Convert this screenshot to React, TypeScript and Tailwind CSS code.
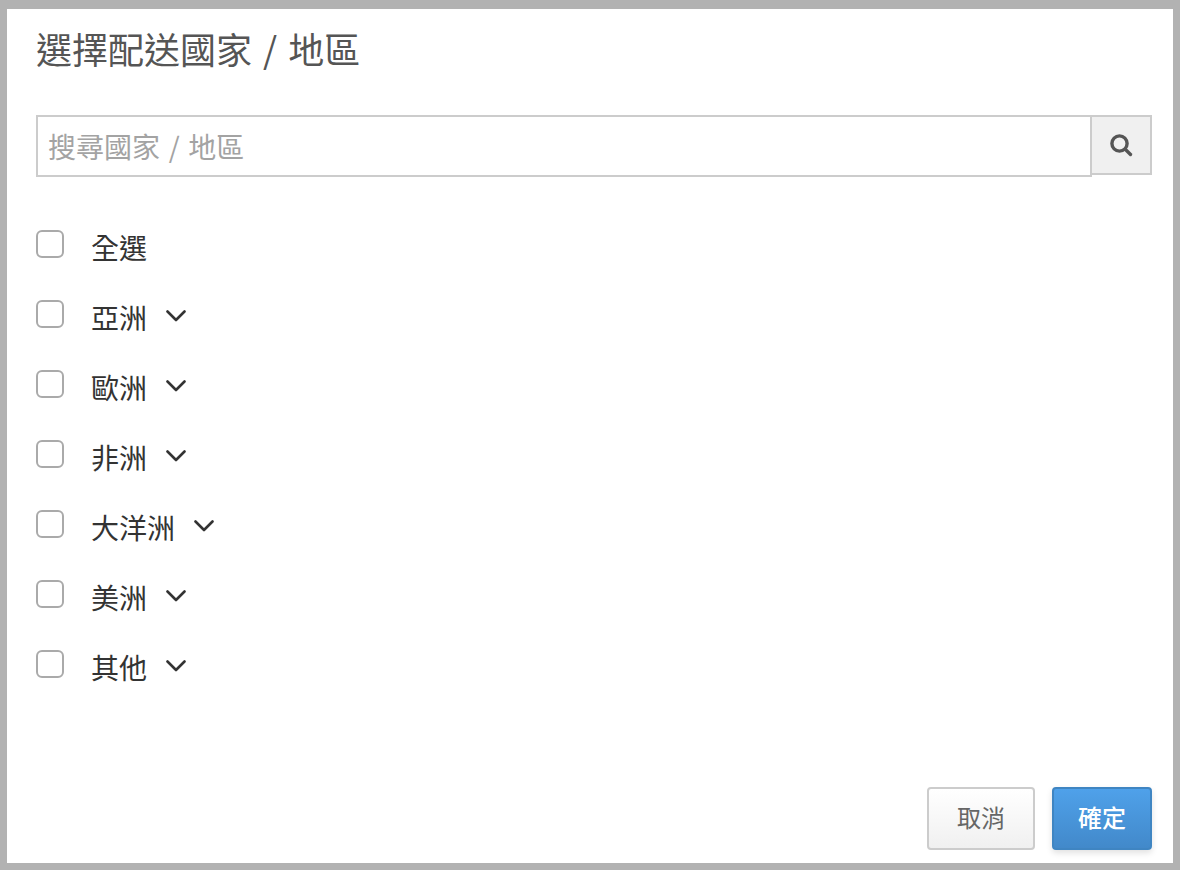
const regions = [
  { label: '全選', expandable: false },
  { label: '亞洲', expandable: true },
  { label: '歐洲', expandable: true },
  { label: '非洲', expandable: true },
  { label: '大洋洲', expandable: true },
  { label: '美洲', expandable: true },
  { label: '其他', expandable: true },
]

const fontStack = 'font-["Noto_Sans_CJK_TC","Liberation_Sans",sans-serif]'

export default function App() {
  return (
    <div className={`${fontStack} flex h-[870px] w-[1180px] bg-[#b2b2b2] pb-[7px] pl-[7px] pr-[7px] pt-[9px]`}>
      <div className="flex flex-1 flex-col bg-white pl-[29px] pr-[21px]">
        <h1 className="mt-[15px] h-[48px] text-[36px] font-normal leading-[48px] text-[#555] [word-spacing:3px]">選擇配送國家 / 地區</h1>

        {/* 搜尋列 */}
        <div className="mt-[43px] flex items-start">
          <input
            placeholder="搜尋國家 / 地區"
            className="h-[62px] min-w-0 flex-1 border-2 border-[#ccc] px-[10px] pb-[1px] text-[28px] text-[#555] outline-none [word-spacing:2.4px] placeholder:text-[#a3a3a3]"
          />
          <button className="-ml-[2px] flex h-[60px] w-[62px] items-center justify-center border-2 border-[#ccc] bg-[#f0f0f0]">
            <svg width="24" height="24" viewBox="0 0 24 24" fill="none" stroke="#555" strokeWidth="3.4" strokeLinecap="round">
              <circle cx="10.5" cy="10.5" r="7.6" />
              <path d="M16.5 16.5 L21.5 21.5" />
            </svg>
          </button>
        </div>

        {/* 地區清單 */}
        <ul className="mt-[53px] flex flex-col gap-[42px]">
          {regions.map((r) => (
            <li key={r.label} className="flex h-[28px] items-center">
              <span className="h-[28px] w-[28px] rounded-[6px] border-2 border-[#aaa] bg-white" />
              <span className="ml-[27px] mt-[6px] text-[28px] leading-[28px] text-[#333]">{r.label}</span>
              {r.expandable && (
                <svg className="ml-[19px] mt-[4px]" width="20" height="12" viewBox="0 0 20 12" fill="none" stroke="#333" strokeWidth="2.6" strokeLinecap="round" strokeLinejoin="round">
                  <path d="M1.5 1.5 L10 10 L18.5 1.5" />
                </svg>
              )}
            </li>
          ))}
        </ul>

        {/* 按鈕 */}
        <div className="mt-auto mb-[13px] flex justify-end gap-[17px]">
          <button className="h-[63px] w-[108px] rounded-[4px] border-2 border-[#ccc] bg-gradient-to-b from-white to-[#f0f0f0] pb-[4px] text-[24px] leading-[24px] text-[#666]">取消</button>
          <button className="h-[63px] w-[100px] rounded-[4px] border-2 border-[#3f85c2] bg-gradient-to-b from-[#4fa1ea] to-[#4289ca] pb-[4px] text-[24px] font-medium leading-[24px] text-white shadow-[0_3px_6px_rgba(0,0,0,0.12)]">確定</button>
        </div>
      </div>
    </div>
  )
}
